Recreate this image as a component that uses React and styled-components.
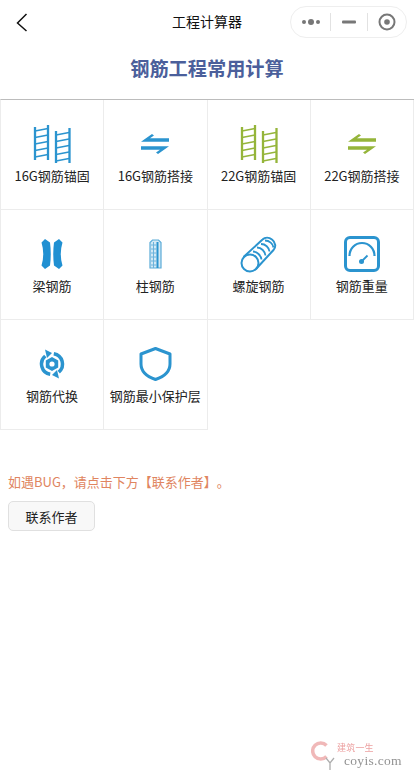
import React from "react";
import styled, { createGlobalStyle } from "styled-components";

const FONT = `"Noto Sans CJK SC", "Noto Sans", "Liberation Sans", sans-serif`;
const BLUE = "#2b94cf";
const GREEN = "#95b53a";

const Global = createGlobalStyle`
  html, body { margin: 0; padding: 0; background: #fff; }
  body { font-family: ${FONT}; color: #222; text-spacing-trim: space-all; }
  * { box-sizing: border-box; }
`;

const Page = styled.div`
  position: relative;
  width: 414px;
  height: 780px;
  overflow: hidden;
  background: #fff;
`;

const NavBar = styled.header`
  display: flex;
  align-items: center;
  justify-content: center;
  height: 43px;
  position: relative;
`;

const BackButton = styled.span`
  position: absolute;
  left: 15px;
  top: 12px;
  display: flex;
`;

const NavTitle = styled.div`
  font-size: 14px;
  line-height: 20px;
  color: #111;
  margin-top: -1px;
`;

const Capsule = styled.div`
  position: absolute;
  right: 7px;
  top: 6px;
  width: 117px;
  height: 32px;
  display: grid;
  grid-template-columns: 39px 37px 39px;
  align-items: center;
  border: 1px solid #eeeeee;
  border-radius: 16px;
  background: #fff;
`;

const CapsulePart = styled.span`
  height: 18px;
  display: flex;
  align-items: center;
  justify-content: center;
  & + & { border-left: 1px solid #e2e2e2; }
`;

const Heading = styled.h1`
  margin: 0;
  height: 56px;
  font-size: 19.2px;
  line-height: 50px;
  font-weight: 700;
  text-align: center;
  color: #4b5f9b;
`;

const Grid = styled.section`
  display: grid;
  grid-template-columns: repeat(4, 103.25px);
  grid-auto-rows: 110px;
  border-top: 1px solid #bcbcbc;
  border-left: 1px solid #ececec;
`;

const Cell = styled.div`
  display: flex;
  flex-direction: column;
  align-items: center;
  padding-top: 22px;
  border-right: 1px solid #ececec;
  border-bottom: 1px solid #ececec;
`;

const IconSlot = styled.div`
  width: 44px;
  height: 44px;
  display: flex;
  align-items: center;
  justify-content: center;
`;

const Label = styled.div`
  font-size: 13px;
  line-height: 20px;
  color: #222;
  white-space: nowrap;
`;

const Notice = styled.p`
  margin: 42px 0 0 8px;
  font-size: 13px;
  line-height: 20px;
  color: #e08560;
`;

const ContactButton = styled.button`
  display: block;
  margin: 9px 0 0 8px;
  width: 87px;
  height: 30px;
  padding: 0;
  font-family: ${FONT};
  font-size: 13px;
  color: #222;
  background: #f8f8f8;
  border: 1px solid #e0e0e0;
  border-radius: 5px;
`;

const Watermark = styled.div`
  position: absolute;
  right: 0;
  bottom: 9px;
  width: 103px;
  height: 30px;
  opacity: 0.8;
  filter: blur(0.4px);
`;

const WatermarkCn = styled.span`
  position: absolute;
  left: 26px;
  top: 2px;
  height: 10px;
  font-size: 9px;
  line-height: 10px;
  letter-spacing: 0.2px;
  color: #e88a8a;
`;

const WatermarkEn = styled.span`
  position: absolute;
  left: 33px;
  top: 13px;
  height: 13px;
  font-family: "Liberation Serif", serif;
  font-size: 13.5px;
  line-height: 13px;
  letter-spacing: 0.3px;
  color: #777;
`;

const WatermarkLogo = styled.svg`
  position: absolute;
  left: 0;
  top: 0;
`;

const Ladder = ({ color }) => (
  <svg width="40" height="40" viewBox="0 0 40 40" fill="none" stroke={color}>
    <g strokeWidth="2.3">
      <path d="M3 3V36" />
      <path d="M16 1V36" />
      <path d="M24 7V39" />
      <path d="M37.500 4V39" />
    </g>
    <g strokeWidth="1.400">
      <path d="M3 7L16 4.500M3 13.500L16 11M3 20L16 17.500M3 26.500L16 24M3 33L16 30.500" />
      <path d="M24 11L37 8.500M24 17.500L37 15M24 24L37 21.500M24 30.500L37 28M24 37L37 34.500" />
    </g>
  </svg>
);

const Swap = ({ color }) => (
  <svg width="28" height="20" viewBox="0 0 28 20" fill={color}>
    <path d="M0 7.700L11 0L13 1.500L9 4.300H28V7.700Z" />
    <path d="M28 12.300L17 20L15 18.500L19 15.700H0V12.300Z" />
  </svg>
);

const Beam = () => (
  <svg width="22" height="30" viewBox="0 0 22 30" fill="#2090d2">
    <path d="M4 0L9 3.500Q10.500 15 9 26.500L4 30L.5 26.500Q4 15 .5 3.500Z" />
    <path d="M18 0L13 3.500Q11.500 15 13 26.500L18 30L21.500 26.500Q18 15 21.500 3.500Z" />
  </svg>
);

const Column = () => (
  <svg width="13" height="30" viewBox="0 0 13 30" fill="none">
    <path d="M1 29V3.500L3.500 1H9.500L12 3.500V29Z" fill="#d3e9f5" stroke="#5aabd8" strokeWidth="1.200" />
    <path d="M8.500 3V29" stroke={BLUE} strokeWidth="2" />
    <path d="M2 6H7.500M2 10H7.500M2 14H7.500M2 18H7.500M2 22H7.500M2 26H7.500" stroke="#6cb3dc" strokeWidth="1" />
    <path d="M4.500 3V29" stroke="#6cb3dc" strokeWidth="1" />
  </svg>
);

const Spiral = () => (
  <svg width="37" height="37" viewBox="0 0 37 37" fill="none" stroke={BLUE}>
    <g strokeWidth="2">
      <circle cx="10" cy="27" r="8.500" />
      <path d="M3.500 21L22.500 3.500C25 1 29 1 32 3.500C36 6.500 36 11.500 33.500 14L16 33" />
    </g>
    <g strokeWidth="1.800">
      <path d="M13 15.500C17 15.500 21 19.500 21.500 23.500" />
      <path d="M17 11.500C21.500 11.500 25 15.500 25.500 19.500" />
      <path d="M21 8C25.500 8 29 11.500 29.500 15.500" />
      <path d="M25 4.500C29.500 4.500 33 8 33.500 11.500" />
    </g>
  </svg>
);

const Gauge = () => (
  <svg width="36" height="36" viewBox="0 0 36 36" fill="none">
    <rect x="1.500" y="1.500" width="33" height="33" rx="4.500" stroke={BLUE} strokeWidth="3" />
    <path d="M5.500 20C5.500 12.500 11 7 18 7C25 7 30.500 12.500 30.500 20" stroke={BLUE} strokeWidth="2.200" />
    <circle cx="17.500" cy="25.500" r="2.500" fill={BLUE} />
    <path d="M18 25L23.500 19.500" stroke={BLUE} strokeWidth="1.800" />
  </svg>
);

const Exchange = () => (
  <svg width="27" height="30" viewBox="0 0 27 30" fill="none">
    <path d="M14.800 4.660A10.500 10.500 0 0 1 19.750 23.040" stroke={BLUE} strokeWidth="3.500" />
    <path d="M11.200 25.300A10.500 10.500 0 0 1 6.250 6.960" stroke={BLUE} strokeWidth="3.500" />
    <path d="M6 0.500L13 4L8 9Z" fill={BLUE} />
    <path d="M20 29.500L13 26L18 21Z" fill={BLUE} />
    <path d="M13 8L19.200 11.500V18.500L13 22L6.800 18.500V11.500Z" fill={BLUE} />
    <circle cx="13" cy="15" r="2.600" fill="#fff" />
  </svg>
);

const Shield = () => (
  <svg width="33" height="34" viewBox="0 0 33 34" fill="none">
    <path d="M16.500 1.500L31 7V17C31 25 24 30 16.500 32.500C9 30 2 25 2 17V7Z" stroke={BLUE} strokeWidth="3" strokeLinejoin="round" />
  </svg>
);

const items = [
  ["16G钢筋锚固", <Ladder color={BLUE} />],
  ["16G钢筋搭接", <Swap color={BLUE} />],
  ["22G钢筋锚固", <Ladder color={GREEN} />],
  ["22G钢筋搭接", <Swap color={GREEN} />],
  ["梁钢筋", <Beam />],
  ["柱钢筋", <Column />],
  ["螺旋钢筋", <Spiral />],
  ["钢筋重量", <Gauge />],
  ["钢筋代换", <Exchange />],
  ["钢筋最小保护层", <Shield />],
];

export default function App() {
  return (
    <Page>
      <Global />
      <NavBar>
        <BackButton>
          <svg width="14" height="20" viewBox="0 0 14 20" fill="none" stroke="#111" strokeWidth="1.500">
            <path d="M11.500 2L2.500 11L11.500 19" />
          </svg>
        </BackButton>
        <NavTitle>工程计算器</NavTitle>
        <Capsule>
          <CapsulePart>
            <svg width="20" height="8" viewBox="0 0 20 8" fill="#777">
              <circle cx="3" cy="4" r="2" />
              <circle cx="10" cy="4" r="3" />
              <circle cx="17" cy="4" r="2" />
            </svg>
          </CapsulePart>
          <CapsulePart>
            <svg width="16" height="4" viewBox="0 0 16 4" fill="#777">
              <rect x="1" y="0.500" width="14" height="3" rx="1" />
            </svg>
          </CapsulePart>
          <CapsulePart>
            <svg width="18" height="18" viewBox="0 0 18 18" fill="none">
              <circle cx="9" cy="9" r="7.500" stroke="#777" strokeWidth="2" />
              <circle cx="9" cy="9" r="2.800" fill="#777" />
            </svg>
          </CapsulePart>
        </Capsule>
      </NavBar>
      <Heading>钢筋工程常用计算</Heading>
      <Grid>
        {items.map(([label, icon]) => (
          <Cell key={label}>
            <IconSlot>{icon}</IconSlot>
            <Label>{label}</Label>
          </Cell>
        ))}
      </Grid>
      <Notice>如遇BUG，请点击下方【联系作者】。</Notice>
      <ContactButton>联系作者</ContactButton>
      <Watermark>
        <WatermarkLogo width="26" height="30" viewBox="0 0 26 30" fill="none">
          <path d="M15.500 4.500A8 8 0 1 0 15.500 15.500" stroke="#eda7a7" strokeWidth="3.500" />
          <path d="M15 17L19 22L23 17M19 22V29" stroke="#999" strokeWidth="1.300" />
        </WatermarkLogo>
        <WatermarkCn>建筑一生</WatermarkCn>
        <WatermarkEn>coyis.com</WatermarkEn>
      </Watermark>
    </Page>
  );
}
